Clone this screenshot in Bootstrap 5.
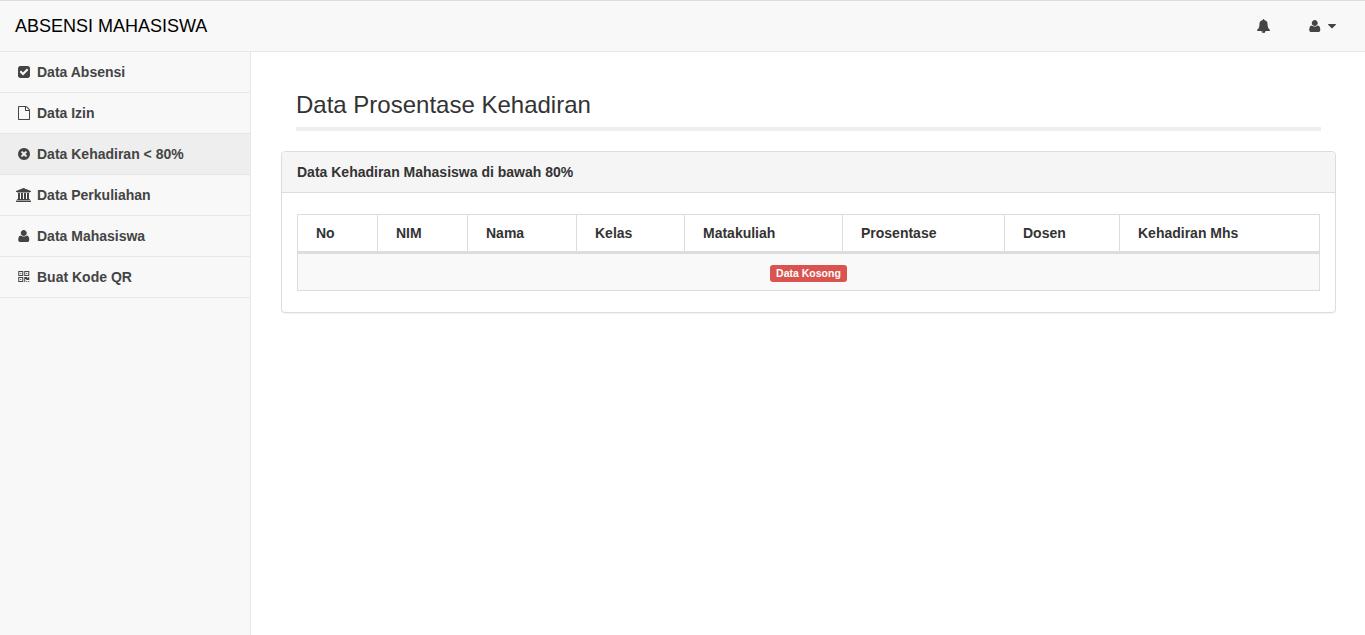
<!DOCTYPE html>
<html lang="id">
<head>
<meta charset="utf-8">
<meta name="viewport" content="width=device-width, initial-scale=1">
<title>Absensi Mahasiswa</title>
<link href="https://cdn.jsdelivr.net/npm/bootstrap@5.3.0/dist/css/bootstrap.min.css" rel="stylesheet">
<style>
body{font:14px/20px "Liberation Sans",Arial,sans-serif;color:#333;background:#f8f8f8}
.topbar{height:52px;border-top:1px solid #dcdce0;border-bottom:1px solid #e7e7e7;background:#f8f8f8;padding:0 29px 0 15px}
.topbar .navbar-brand{font-size:18px;line-height:20px;color:#000;padding:0;margin:0}
.icon{display:block;width:16px;height:14px;fill:#444;overflow:visible;flex:none}
.account{gap:5px}
.icon.caret{width:8px;height:5px}
.side{width:251px;border-right:1px solid #e7e7e7;flex:none}
.side .nav-link{height:41px;padding:0 15px 0 16px;gap:5px;border-bottom:1px solid #e7e7e7;color:#444;font-weight:700;border-radius:0}
.side .nav-link.active{background:#eee}
.content{background:#fff;padding:0 29px 0 30px;min-width:0}
.page-title{font-size:24px;line-height:26px;font-weight:400;margin:40px 15px 9px;color:#333}
.rule{height:4px;background:#eee;margin:0 15px 20px}
.panel{border-color:#ddd;border-radius:4px;box-shadow:0 1px 1px rgba(0,0,0,.05)}
.panel .card-header{background:#f5f5f5;border-color:#ddd;padding:10px 15px;font-weight:700}
.panel .card-body{padding:21px 15px}
.grid{--bs-table-color:#333;table-layout:fixed;width:1023px;border-color:#ddd;margin:0}
.grid th{padding:8px 18px;border-bottom:3px solid #ddd;color:#333}
.grid td{padding:8px}
.grid>:not(caption)>*>td{background:#f9f9f9}
.c1{width:80px}.c2{width:90px}.c3{width:109px}.c4{width:108px}.c5{width:158px}.c6{width:162px}.c7{width:115px}
.empty{display:inline-block;background:#d9534f;color:#fff;font-size:10.5px;line-height:10.5px;padding:3px 6px 4px;border-radius:3px;vertical-align:middle}
</style>
<script src="https://cdn.jsdelivr.net/npm/bootstrap@5.3.0/dist/js/bootstrap.bundle.min.js"></script>
</head>
<body>
<svg class="d-none">
<symbol id="user" viewBox="0 0 2048 1792"><path transform="matrix(1 0 0 -1 288 1536)" d="M1408 131q0-120-73-189.5t-194-69.5h-874q-121 0-194 69.5t-73 189.5q0 53 3.5 103.5t14 109t26.5 108.5t43 97.5t62 81t85.5 53.5t111.5 20q9 0 42-21.5t74.5-48t108-48t133.5-21.5t133.5 21.5t108 48t74.5 48t42 21.5q61 0 111.5-20t85.5-53.5t62-81t43-97.5t26.5-108.5t14-109t3.5-103.5zM1088 1024q0-159-112.5-271.5t-271.5-112.5t-271.5 112.5t-112.5 271.5t112.5 271.5t271.5 112.5t271.5-112.5t112.5-271.5z"/></symbol>
</svg>
<div class="d-flex flex-column vh-100">
<nav class="topbar d-flex align-items-center flex-shrink-0">
  <a class="navbar-brand" href="#">ABSENSI MAHASISWA</a>
  <div class="ms-auto d-flex align-items-center">
    <a href="#" aria-label="Notifikasi"><svg class="icon" viewBox="-192 0 2048 1792"><path d="M912 1696q0-16-16-16-59 0-101.5-42.5t-42.5-101.5q0-16-16-16t-16 16q0 73 51.5 124.5t124.5 51.5q16 0 16-16zm816-288q0 52-38 90t-90 38h-448q0 106-75 181t-181 75-181-75-75-181h-448q-52 0-90-38t-38-90q50-42 91-88t85-119.5 74.5-158.5 50-206 19.5-260q0-152 117-282.5t307-158.5q-8-19-8-39 0-40 28-68t68-28 68 28 28 68q0 20-8 39 190 28 307 158.5t117 282.5q0 139 19.5 260t50 206 74.5 158.5 85 119.5 91 88z"/></svg></a>
    <a class="account d-flex align-items-center ms-4 ps-2" href="#" aria-label="Akun"><svg class="icon ms-1"><use href="#user"/></svg><svg class="icon caret" viewBox="0 0 8 5"><path d="M.5 0h7q.5 0 .5.5 0 .2-.15.35l-3.5 3.5q-.35.3-.7 0L.15.85Q0 .7 0 .5 0 0 .5 0z"/></svg></a>
  </div>
</nav>
<div class="d-flex flex-grow-1">
  <aside class="side">
    <nav class="nav flex-column">
      <a class="nav-link d-flex align-items-center" href="#"><svg class="icon" viewBox="-128 0 2048 1792"><path d="M813 1299l614-614q19-19 19-45t-19-45l-102-102q-19-19-45-19t-45 19l-467 467-211-211q-19-19-45-19t-45 19l-102 102q-19 19-19 45t19 45l358 358q19 19 45 19t45-19zm851-883v960q0 119-84.5 203.5t-203.5 84.5h-960q-119 0-203.5-84.5t-84.5-203.5v-960q0-119 84.5-203.5t203.5-84.5h960q119 0 203.5 84.5t84.5 203.5z"/></svg>Data Absensi</a>
      <a class="nav-link d-flex align-items-center" href="#"><svg class="icon" viewBox="-128 0 2048 1792"><path d="M1596 380q28 28 48 76t20 88v1152q0 40-28 68t-68 28h-1344q-40 0-68-28t-28-68v-1600q0-40 28-68t68-28h896q40 0 88 20t76 48zm-444-244v376h376q-10-29-22-41l-313-313q-12-12-41-22zm384 1528v-1024h-416q-40 0-68-28t-28-68v-416h-768v1536h1280z"/></svg>Data Izin</a>
      <a class="nav-link active d-flex align-items-center" href="#"><svg class="icon" viewBox="-128 0 2048 1792"><path d="M1277 1122q0-26-19-45l-181-181 181-181q19-19 19-45 0-27-19-46l-90-90q-19-19-46-19-26 0-45 19l-181 181-181-181q-19-19-45-19-27 0-46 19l-90 90q-19 19-19 46 0 26 19 45l181 181-181 181q-19 19-19 45 0 27 19 46l90 90q19 19 46 19 26 0 45-19l181-181 181 181q19 19 45 19 27 0 46-19l90-90q19-19 19-46zm387-226q0 209-103 385.5t-279.5 279.5-385.5 103-385.5-103-279.5-279.5-103-385.5 103-385.5 279.5-279.5 385.5-103 385.5 103 279.5 279.5 103 385.5z"/></svg>Data Kehadiran &lt; 80%</a>
      <a class="nav-link d-flex align-items-center" href="#"><svg class="icon" viewBox="0 0 2048 1792"><path transform="matrix(1 0 0 -1 0 1536)" d="M960 1536l960-384v-128h-128q0-26-20.5-45t-48.5-19h-1526q-28 0-48.5 19t-20.5 45h-128v128zM256 896h256v-768h128v768h256v-768h128v768h256v-768h128v768h256v-768h59q28 0 48.5-19t20.5-45v-64h-1664v64q0 26 20.5 45t48.5 19h59zM1851-64q28 0 48.5-19t20.5-45v-128h-1920v128q0 26 20.5 45t48.5 19z"/></svg>Data Perkuliahan</a>
      <a class="nav-link d-flex align-items-center" href="#"><svg class="icon"><use href="#user"/></svg>Data Mahasiswa</a>
      <a class="nav-link d-flex align-items-center" href="#"><svg class="icon" viewBox="0 0 2048 1792"><path transform="matrix(1 0 0 -1 288 1536)" d="M384 384v-128h-128v128h128zM384 1152v-128h-128v128h128zM1152 1152v-128h-128v128h128zM128 129h384v383h-384v-383zM128 896h384v384h-384v-384zM896 896h384v384h-384v-384zM640 640v-640h-640v640h640zM1152 128v-128h-128v128h128zM1408 128v-128h-128v128h128zM1408 640v-384h-384v128h-128v-384h-128v640h384v-128h128v128h128zM640 1408v-640h-640v640h640zM1408 1408v-640h-640v640h640z"/></svg>Buat Kode QR</a>
    </nav>
  </aside>
  <main class="content flex-grow-1">
    <h1 class="page-title">Data Prosentase Kehadiran</h1>
    <div class="rule"></div>
    <section class="card panel">
      <div class="card-header">Data Kehadiran Mahasiswa di bawah 80%</div>
      <div class="card-body">
        <table class="table table-bordered grid">
          <colgroup><col class="c1"><col class="c2"><col class="c3"><col class="c4"><col class="c5"><col class="c6"><col class="c7"><col></colgroup>
          <thead><tr><th>No</th><th>NIM</th><th>Nama</th><th>Kelas</th><th>Matakuliah</th><th>Prosentase</th><th>Dosen</th><th>Kehadiran Mhs</th></tr></thead>
          <tbody><tr><td colspan="8" class="text-center"><span class="empty fw-bold">Data Kosong</span></td></tr></tbody>
        </table>
      </div>
    </section>
  </main>
</div>
</div>
</body>
</html>
